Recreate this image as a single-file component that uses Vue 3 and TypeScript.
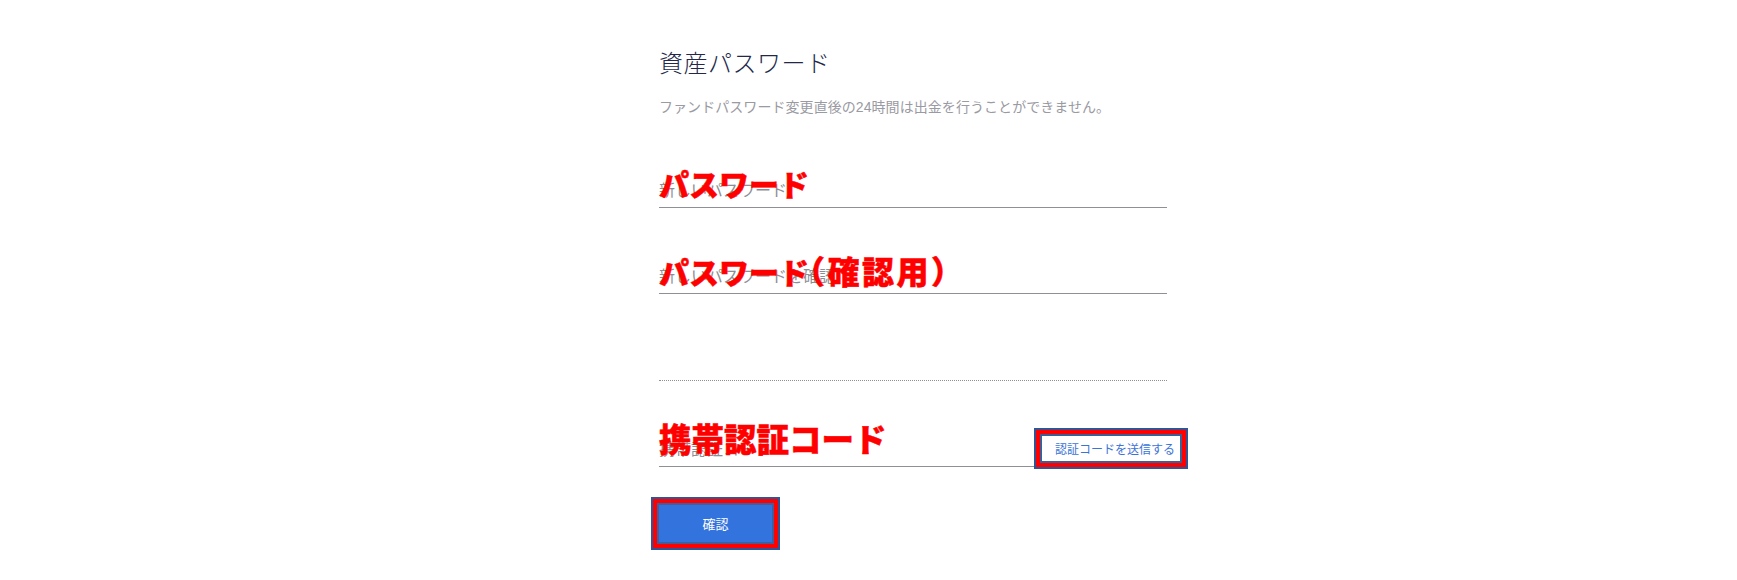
<script setup lang="ts">
const fields = [
  { placeholder: '新しいパスワード', note: 'パスワード', extra: '', pos: 'first' },
  { placeholder: '新しいパスワードを確認', note: 'パスワード', extra: '（確認用）', pos: 'second' },
]
</script>

<template>
  <main class="page">
    <h1 class="title">資産パスワード</h1>
    <p class="desc">ファンドパスワード変更直後の24時間は出金を行うことができません。</p>

    <div v-for="f in fields" :key="f.pos" class="field" :class="f.pos">
      <input class="input" type="password" :placeholder="f.placeholder" />
      <span class="note">{{ f.note }}<span v-if="f.extra" class="extra">{{ f.extra }}</span></span>
    </div>

    <div class="dotted"></div>

    <div class="field code">
      <input class="input" type="text" placeholder="携帯認証コード" />
      <span class="note">携帯認証コード</span>
      <button class="send" type="button">認証コードを送信する</button>
    </div>

    <button class="submit" type="button">確認</button>
  </main>
</template>

<style>
html, body { background: #fff; }
</style>

<style scoped>
.page {
  box-sizing: border-box;
  width: 508px;
  min-height: 580px;
  margin-left: 659px;
  padding-top: 48px;
  font-family: "Liberation Sans", "Noto Sans CJK JP", sans-serif;
}
.title {
  margin: 0;
  font-size: 24px;
  line-height: 32px;
  font-weight: 300;
  letter-spacing: 0.5px;
  color: #23284a;
}
.desc {
  margin: 16px 0 0;
  font-size: 14px;
  line-height: 22px;
  letter-spacing: 0.06px;
  color: #9a9aa2;
}
.field {
  position: relative;
  height: 30px;
  margin-top: 55px;
  border-bottom: 1px solid #8f8f96;
}
.field.first { margin-top: 59px; }
.input {
  display: block;
  box-sizing: border-box;
  width: 100%;
  height: 100%;
  padding: 0 0 3px;
  border: 0;
  outline: 0;
  background: transparent;
  font: inherit;
  font-size: 16px;
}
.input::placeholder { color: #8d8d95; opacity: 1; }
.note {
  position: absolute;
  left: 0;
  top: -11px;
  font-size: 30px;
  line-height: 40px;
  font-weight: 900;
  font-feature-settings: "halt";
  -webkit-text-stroke: 0.5px #ff0000;
  color: #ff0000;
  white-space: nowrap;
}
.second .note { top: -10px; }
.code .note {
  top: -15px;
  font-size: 32.5px;
}
.extra {
  font-size: 32px;
  letter-spacing: 2.5px;
}
.dotted {
  margin-top: 86px;
  border-bottom: 1px dotted #8f8f96;
}
.send {
  position: absolute;
  right: -15px;
  top: -2px;
  width: 142px;
  height: 29px;
  box-sizing: border-box;
  padding: 0 0 0 13px;
  text-align: left;
  background: #fff;
  border: 2px solid #3a6098;
  outline: 4px solid #ff0000;
  box-shadow: 0 0 0 6px #2f5597;
  font: inherit;
  font-size: 12px;
  color: #3b74d8;
}
.submit {
  display: block;
  box-sizing: border-box;
  width: 117px;
  height: 41px;
  margin: 36px 0 0 -2px;
  background: #3273de;
  border: 2px solid #3f5f9e;
  outline: 4px solid #ff0000;
  box-shadow: 0 0 0 6px #2f5597;
  font: inherit;
  font-size: 13px;
  color: #fff;
}
</style>
